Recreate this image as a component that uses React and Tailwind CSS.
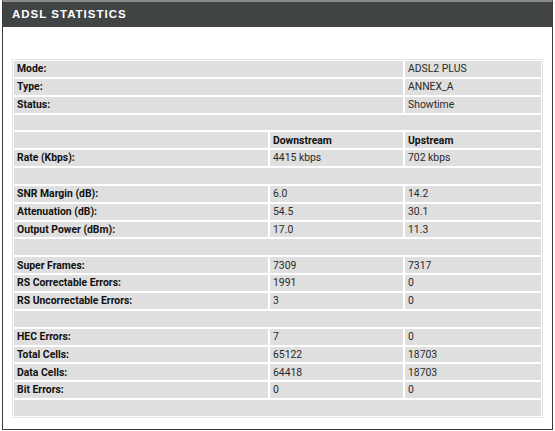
import React from "react";

const rows = [
  ["Mode:", "ADSL2 PLUS"],
  ["Type:", "ANNEX_A"],
  ["Status:", "Showtime"],
  null,
  ["", "Downstream", "Upstream", true],
  ["Rate (Kbps):", "4415 kbps", "702 kbps"],
  null,
  ["SNR Margin (dB):", "6.0", "14.2"],
  ["Attenuation (dB):", "54.5", "30.1"],
  ["Output Power (dBm):", "17.0", "11.3"],
  null,
  ["Super Frames:", "7309", "7317"],
  ["RS Correctable Errors:", "1991", "0"],
  ["RS Uncorrectable Errors:", "3", "0"],
  null,
  ["HEC Errors:", "7", "0"],
  ["Total Cells:", "65122", "18703"],
  ["Data Cells:", "64418", "18703"],
  ["Bit Errors:", "0", "0"],
  null,
];

const cell = "bg-[#dfdfdf] h-[15.85px] flex items-center px-[3px] pt-px leading-none";

const App = () => {
  return (
    <div className="w-[555px] h-[431px] bg-white pl-[2px] font-['Roboto',sans-serif]">
      <div className="w-[551px] h-[430px] border-x border-b border-x-[#3a3a3a] border-b-[#3a3a3a] border-t-2 border-t-[#8c8c8c] flex flex-col">
        <div className="h-[25px] bg-[#404444] flex items-center px-[9px] pt-px">
          <span className="text-white font-bold text-[11.5px] tracking-[1px] font-['Liberation_Sans',sans-serif]">
            ADSL STATISTICS
          </span>
        </div>
        <div className="px-[9px] pt-[32px]">
          <div className="border border-[#e4e4e4] p-px grid grid-cols-[254px_133px_1fr] gap-[2px] text-[10.4px] text-[#2a2a2a]">
            {rows.map((r, i) =>
              r === null ? (
                <div key={i} className={`${cell} col-span-3`} />
              ) : r.length === 2 ? (
                <React.Fragment key={i}>
                  <div className={`${cell} col-span-2 font-bold text-[#111]`}>{r[0]}</div>
                  <div className={cell}>{r[1]}</div>
                </React.Fragment>
              ) : (
                <React.Fragment key={i}>
                  <div className={`${cell} font-bold text-[#111]`}>{r[0]}</div>
                  <div className={`${cell} ${r[3] ? "font-bold text-[#111]" : ""}`}>{r[1]}</div>
                  <div className={`${cell} ${r[3] ? "font-bold text-[#111]" : ""}`}>{r[2]}</div>
                </React.Fragment>
              )
            )}
          </div>
        </div>
      </div>
    </div>
  );
};

export default App;
